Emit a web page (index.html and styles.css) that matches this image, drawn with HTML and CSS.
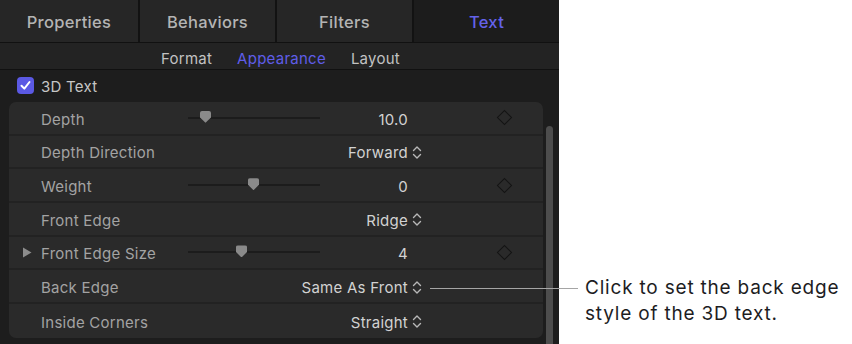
FILE: index.html
```html
<!DOCTYPE html>
<html lang="en">
<head>
  <meta charset="UTF-8" />
  <title>Text Inspector - Appearance</title>
  <link rel="stylesheet" href="styles.css">
</head>
<body>

<div class="stage">

  <div class="panel">
    <div class="tabs">
      <div class="tab">Properties</div>
      <div class="tab">Behaviors</div>
      <div class="tab">Filters</div>
      <div class="tab active">Text</div>
    </div>

    <div class="subtabs">
      <span>Format</span>
      <span class="on">Appearance</span>
      <span>Layout</span>
    </div>

    <div class="body">
      <div class="content">
        <label class="check">
          <span class="box">
            <svg width="11" height="11" viewBox="0 0 11 11"><path d="M1.5 5.8 L4.3 8.6 L9.5 2" fill="none" stroke="#fff" stroke-width="2" stroke-linecap="round" stroke-linejoin="round"/></svg>
          </span>
          <span class="check-text">3D Text</span>
        </label>

        <div class="group">
          <div class="row">
            <span class="disc"></span>
            <span class="label">Depth</span>
            <span class="slider"><i class="thumb" style="left: 12px"></i></span>
            <span class="value">10.0</span>
            <span class="pop"></span>
            <span class="gap"></span>
            <span class="key"><i class="diamond"></i></span>
          </div>
          <div class="row">
            <span class="disc"></span>
            <span class="label">Depth Direction</span>
            <span></span>
            <span class="value">Forward</span>
            <span class="pop"><svg width="10" height="15" viewBox="0 0 10 15"><path d="M1.5 5.5 L5 2 L8.5 5.5 M1.5 9.5 L5 13 L8.5 9.5" fill="none" stroke="#b8b8b8" stroke-width="1.4" stroke-linecap="round" stroke-linejoin="round"/></svg></span>
            <span class="gap"></span>
            <span class="key"></span>
          </div>
          <div class="row">
            <span class="disc"></span>
            <span class="label">Weight</span>
            <span class="slider"><i class="thumb" style="left: 60px"></i></span>
            <span class="value">0</span>
            <span class="pop"></span>
            <span class="gap"></span>
            <span class="key"><i class="diamond"></i></span>
          </div>
          <div class="row">
            <span class="disc"></span>
            <span class="label">Front Edge</span>
            <span></span>
            <span class="value">Ridge</span>
            <span class="pop"><svg width="10" height="15" viewBox="0 0 10 15"><path d="M1.5 5.5 L5 2 L8.5 5.5 M1.5 9.5 L5 13 L8.5 9.5" fill="none" stroke="#b8b8b8" stroke-width="1.4" stroke-linecap="round" stroke-linejoin="round"/></svg></span>
            <span class="gap"></span>
            <span class="key"></span>
          </div>
          <div class="row">
            <span class="disc"><svg width="10" height="11" viewBox="0 0 10 11"><path d="M1 0.5 L9.5 5.5 L1 10.5 Z" fill="#8c8c8c"/></svg></span>
            <span class="label">Front Edge Size</span>
            <span class="slider"><i class="thumb" style="left: 48px"></i></span>
            <span class="value">4</span>
            <span class="pop"></span>
            <span class="gap"></span>
            <span class="key"><i class="diamond"></i></span>
          </div>
          <div class="row">
            <span class="disc"></span>
            <span class="label">Back Edge</span>
            <span></span>
            <span class="value">Same As Front</span>
            <span class="pop"><svg width="10" height="15" viewBox="0 0 10 15"><path d="M1.5 5.5 L5 2 L8.5 5.5 M1.5 9.5 L5 13 L8.5 9.5" fill="none" stroke="#b8b8b8" stroke-width="1.4" stroke-linecap="round" stroke-linejoin="round"/></svg></span>
            <span class="gap"></span>
            <span class="key"></span>
          </div>
          <div class="row">
            <span class="disc"></span>
            <span class="label">Inside Corners</span>
            <span></span>
            <span class="value">Straight</span>
            <span class="pop"><svg width="10" height="15" viewBox="0 0 10 15"><path d="M1.5 5.5 L5 2 L8.5 5.5 M1.5 9.5 L5 13 L8.5 9.5" fill="none" stroke="#b8b8b8" stroke-width="1.4" stroke-linecap="round" stroke-linejoin="round"/></svg></span>
            <span class="gap"></span>
            <span class="key"></span>
          </div>
        </div>
      </div>

      <div class="scroll"><div class="scroll-thumb"></div></div>
    </div>
  </div>

  <div class="callout">
    <p>Click to set the back edge style of the 3D text.</p>
  </div>

  <!-- leader line from the Back Edge popup to the note -->
  <div class="leader"></div>

</div>

</body>
</html>
```

FILE: styles.css
```css
body { margin: 0; background: #ffffff; font-family: Inter, "Noto Sans", sans-serif; }
.stage { position: relative; display: flex; width: 852px; height: 344px; overflow: hidden; }

.panel { width: 559px; flex: none; background: #1d1d1d; display: flex; flex-direction: column; }

.tabs { flex: none; display: grid; grid-template-columns: 140px 137px 137px 1fr; height: 42px; background: #262626; border-bottom: 1px solid #111; }
.tab { display: flex; align-items: center; justify-content: center; padding-top: 2px; font-size: 16.5px; font-weight: 500; letter-spacing: 0.3px; color: #b4b4b4; border-right: 2px solid #121212; }
.tab.active { background: #1c1c1c; color: #6462ea; border-right: none; }

.subtabs { flex: none; display: flex; justify-content: center; align-items: center; gap: 25px; height: 27px; box-sizing: border-box; padding: 4px 0 0 2px; background: #232323; border-bottom: 1px solid #111; font-size: 15px; letter-spacing: 0.25px; color: #c2c2c2; }
.subtabs .on { color: #5f5de8; }

.body { flex: 1; display: flex; padding-left: 9px; min-height: 0; }
.content { width: 534px; padding-top: 7px; }

.check { display: flex; align-items: center; gap: 7px; height: 17px; margin: 0 0 8px 8px; font-size: 15px; letter-spacing: 0.25px; color: #c6c6c6; }
.check-text { padding-top: 2px; }
.box { width: 17px; height: 17px; border-radius: 4px; background: #5b59e4; display: flex; align-items: center; justify-content: center; }

.group { background: #2a2a2a; border-radius: 7px; overflow: hidden; }
.row { display: grid; grid-template-columns: 20px 147px 132px 88px 22px 54px 40px; align-items: center; padding: 0 19px 0 12px; height: 33.67px; box-sizing: border-box; border-bottom: 2px solid #222; font-size: 15px; letter-spacing: 0.25px; }
.row:last-child { border-bottom: none; }
.disc { display: flex; align-items: center; padding-left: 1px; }
.label { color: #a3a3a3; white-space: nowrap; padding-top: 3px; }
.value { display: flex; justify-content: flex-end; white-space: nowrap; color: #d2d2d2; padding-top: 3px; }
.pop { display: flex; align-items: center; padding: 2px 0 0 4px; }

.slider { position: relative; height: 2px; background: #1c1c1c; }
.thumb { position: absolute; top: -6px; width: 11px; height: 12px; background: #8a8a8a; clip-path: polygon(0 0, 100% 0, 100% 55%, 50% 100%, 0 55%); border-radius: 2px 2px 0 0; }

.key { display: flex; justify-content: center; }
.diamond { width: 9px; height: 9px; border: 1.5px solid #141414; transform: rotate(45deg); }

.scroll { width: 7px; margin-left: 3px; }
.scroll-thumb { margin-top: 56px; height: 240px; background: #4d4d4d; border-radius: 4px 4px 0 0; }

.callout { padding: 275px 0 0 26px; }
.callout p { margin: 0; width: 266px; font-size: 19px; letter-spacing: 0.8px; line-height: 26px; color: #1d1d1f; }

.leader { position: absolute; left: 430px; top: 288px; width: 148px; height: 1px; background: #a5a5a5; }
```
